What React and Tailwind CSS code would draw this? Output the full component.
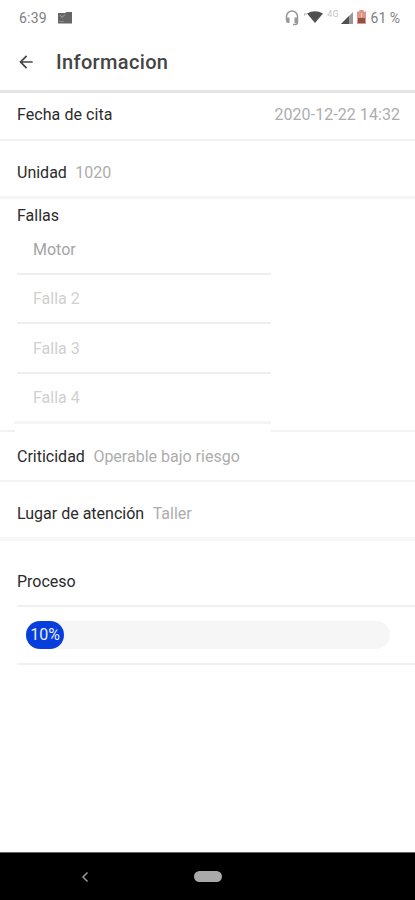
import { MdArrowBack } from "react-icons/md";

const fallas = [
  { name: "Motor", filled: true },
  { name: "Falla 2" },
  { name: "Falla 3" },
  { name: "Falla 4" },
];

function StatusBar() {
  return (
    <div className="flex h-9 items-center justify-between pr-[15px] pl-[19px] text-[14px] text-[#808080]">
      <div className="flex items-center gap-[11px]">
        <span className="tracking-[0.2px]">6:39</span>
        <svg width="15" height="12" viewBox="0 0 15 12">
          <path d="M0 1h7l1.500-1H14v11.500H0z" fill="#666" />
          <path d="M2 3l2 2.500L7 2.500" fill="none" stroke="#aaa" />
          <path d="M1 9.500h5" stroke="#888" />
        </svg>
      </div>

      <div className="flex items-center">
        <svg width="14" height="16" viewBox="0 0 14 16" fill="none">
          <path d="M1.500 10V6.500a5.500 5.500 0 0 1 11 0V12q0 2.500-2.500 2.500H8" stroke="#999" strokeWidth="1.500" />
          <path d="M1 7.500h3.500v5.500H3Q1 13 1 11zM9.500 7.500H13V13H9.500z" fill="#999" />
        </svg>
        <svg className="ml-[5px] -mt-[2px]" width="19" height="12" viewBox="0 0 19 12">
          <path d="M3 2.500Q11 -2 19 2.500L11 12z" fill="#505050" />
          <path d="M0 3h3M.500 2.500v2" stroke="#bbb" />
        </svg>
        <span className="ml-[4px] -mt-2 text-[9px] text-[#c4c4c4]">4G</span>
        <svg className="ml-[2px]" width="12" height="12" viewBox="0 0 12 12">
          <path d="M12 0v12H0z" fill="#999" />
          <path d="M8 4v8H0z" fill="#505050" />
        </svg>
        <svg className="-mt-[2px] ml-[4px]" width="9" height="14" viewBox="0 0 9 14">
          <path d="M2.500 0h4v1.500H9V14H0V1.500h2.500z" fill="#dc9788" />
          <path d="M1 8h7v5H1z" fill="#8f5145" />
          <path d="M4.500 3v4" stroke="#efcfc6" />
        </svg>
        <span className="ml-[5px]">61 %</span>
      </div>
    </div>
  );
}

function Header() {
  return (
    <header className="flex h-[57px] items-center border-b-[3px] border-[#e4e4e4] pb-[2px] pl-[16px] text-[#444]">
      <MdArrowBack size={20} />
      <h1 className="ml-[20px] text-[20px] font-medium tracking-[0.35px]">Informacion</h1>
    </header>
  );
}

function Row({ label, value, className }) {
  return (
    <div className={"flex items-center pr-[15px] pl-[17px] " + className}>
      <span className="text-[#2b2b2b]">{label}</span>
      <span className="ml-[8.500px] text-[#adadad]">{value}</span>
    </div>
  );
}

function Fallas() {
  return (
    <section className="h-[233px] border-b-2 border-[#f1f1f1]">
      <h2 className="h-[26px] pt-[5px] pl-[17px] text-[#2b2b2b]">Fallas</h2>
      {/* the list is taller than the section, so it covers part of the bottom divider */}
      <ul className="ml-[15px] h-[207px] w-[256px] bg-white">
        {fallas.map((falla) => (
          <li
            key={falla.name}
            className={
              "ml-[2px] flex h-[49.500px] items-center border-b-2 border-[#eeeeee] pt-[2px] pl-[16px] last:-ml-[1px] last:h-[50.500px] last:border-b-3 last:border-[#f5f5f5] last:pl-[19px] " +
              (falla.filled ? "text-[#a4a4a4]" : "text-[#d0d0d0]")
            }
          >
            {falla.name}
          </li>
        ))}
      </ul>
    </section>
  );
}

function Proceso({ percent }) {
  return (
    <section className="pl-[17px]">
      <h2 className="flex h-[66px] items-center border-b-2 border-[#f0f0f0] pt-[18px] text-[#2b2b2b]">
        Proceso
      </h2>
      <div className="flex h-[58px] items-center border-b-2 border-[#f0f0f0] pr-[25px] pl-[9px]">
        <div className="h-7 w-full rounded-full bg-[#f6f6f6]">
          <div
            className="flex h-full min-w-[38px] items-center justify-center rounded-full bg-[#073fdc] text-[#e8edff]"
            style={{ width: percent + "%" }}
          >
            {percent}%
          </div>
        </div>
      </div>
    </section>
  );
}

function NavBar() {
  return (
    <nav className="mt-auto grid h-12 grid-cols-[1fr_28px_1fr] items-center border-t border-[#666] bg-black">
      <svg className="ml-[81px]" width="8" height="12" viewBox="0 0 8 12" fill="none">
        <path d="M6.500 1.500L2 6l4.500 4.500" stroke="#999" strokeWidth="1.500" />
      </svg>
      <div className="h-[11px] rounded-full bg-[#a9a9a9]" />
    </nav>
  );
}

export default function App() {
  return (
    <div className="flex h-[900px] w-[415px] flex-col bg-white font-['Roboto',sans-serif] text-[16px] leading-[24px]">
      <StatusBar />
      <Header />
      <Row
        label="Fecha de cita"
        value="2020-12-22 14:32"
        className="h-[48px] justify-between border-b-2 border-[#f3f3f3] pb-[2px] tracking-[0.06px]"
      />
      <Row label="Unidad" value="1020" className="h-[58px] border-b-3 border-[#f5f5f5] pt-[8px]" />
      <Fallas />
      <Row
        label="Criticidad"
        value="Operable bajo riesgo"
        className="h-[50px] border-b-2 border-[#f1f1f1] pt-[2px]"
      />
      <Row label="Lugar de atención" value="Taller" className="h-[59px] border-b-4 border-[#f7f7f7] pt-[8px]" />
      <Proceso percent={10} />
      <NavBar />
    </div>
  );
}
